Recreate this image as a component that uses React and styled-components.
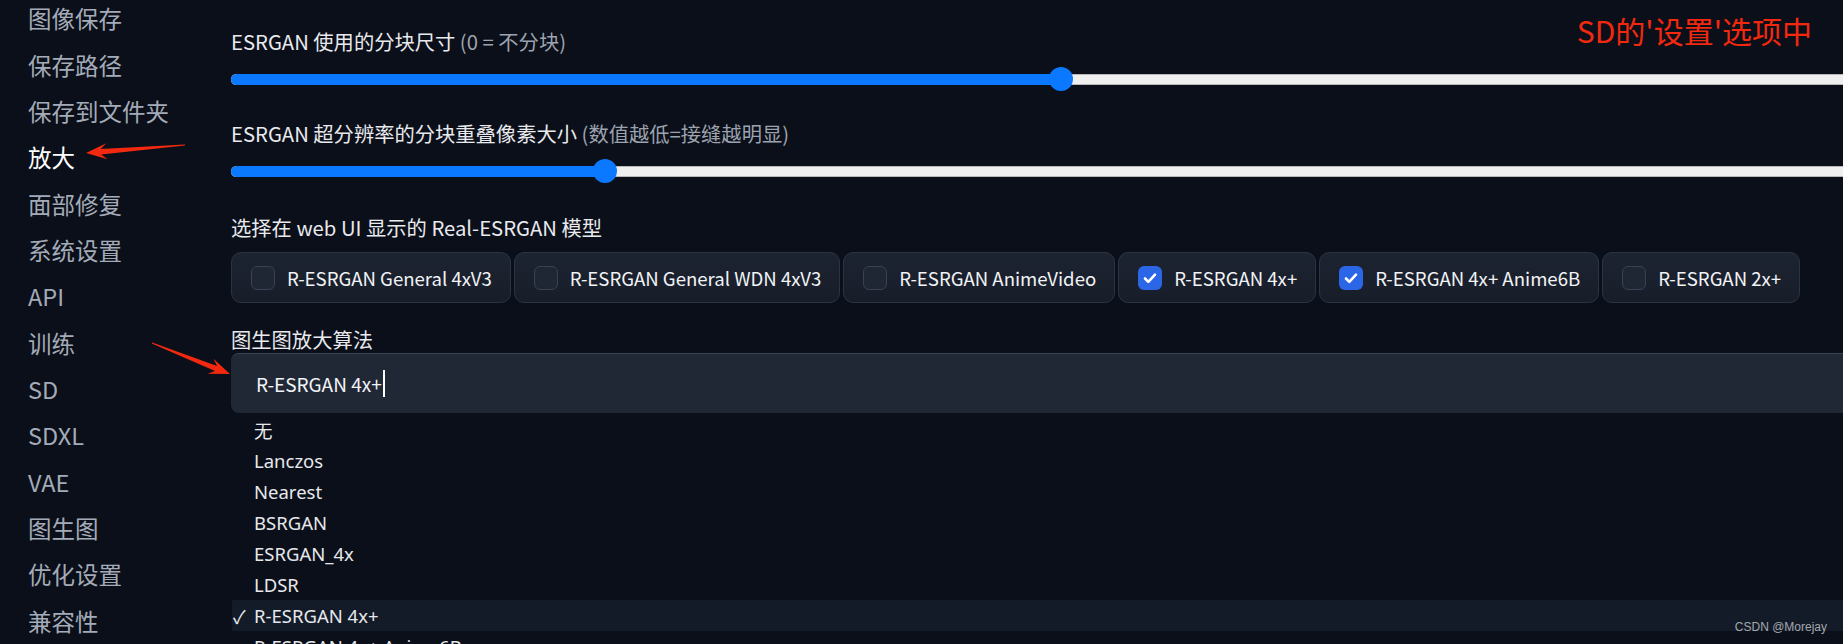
import React from "react";
import styled, { createGlobalStyle } from "styled-components";

const GlobalStyle = createGlobalStyle`
  html, body {
    margin: 0;
    padding: 0;
    background: #0b0f19;
  }
  body {
    font-family: "Noto Sans CJK SC", "Noto Sans", sans-serif;
    overflow: hidden;
  }
`;

const navItems = [
  "图像保存",
  "保存路径",
  "保存到文件夹",
  "放大",
  "面部修复",
  "系统设置",
  "API",
  "训练",
  "SD",
  "SDXL",
  "VAE",
  "图生图",
  "优化设置",
  "兼容性",
];

const models = [
  { name: "R-ESRGAN General 4xV3", checked: false },
  { name: "R-ESRGAN General WDN 4xV3", checked: false },
  { name: "R-ESRGAN AnimeVideo", checked: false },
  { name: "R-ESRGAN 4x+", checked: true },
  { name: "R-ESRGAN 4x+ Anime6B", checked: true },
  { name: "R-ESRGAN 2x+", checked: false },
];

const upscalers = [
  "无",
  "Lanczos",
  "Nearest",
  "BSRGAN",
  "ESRGAN_4x",
  "LDSR",
  "R-ESRGAN 4x+",
  "R-ESRGAN 4x+ Anime6B",
  "ScuNET",
];

// tapered annotation arrow, like the ones screenshot tools draw
const arrowPoints = (x1, y1, x2, y2) => {
  const len = Math.hypot(x2 - x1, y2 - y1);
  const ux = (x2 - x1) / len;
  const uy = (y2 - y1) / len;
  const nx = -uy;
  const ny = ux;
  const at = (along, side) => [x2 - ux * along + nx * side, y2 - uy * along + ny * side];
  const pts = [
    [x1 + nx * 0.6, y1 + ny * 0.6],
    at(15, 2.8),
    at(21, 8),
    [x2, y2],
    at(21, -8),
    at(15, -2.8),
    [x1 - nx * 0.6, y1 - ny * 0.6],
  ];
  return pts.map((p) => p.map((v) => v.toFixed(1)).join(",")).join(" ");
};

const Slider = ({ value }) => (
  <SliderRow>
    <Track>
      <Fill style={{ width: `${value}%` }} />
      <Thumb style={{ left: `${value}%` }} />
    </Track>
  </SliderRow>
);

const CheckIcon = () => (
  <svg width="24" height="24" viewBox="0 0 24 24">
    <path
      d="M7 12.5l3.3 3.4L17 8.6"
      fill="none"
      stroke="#fff"
      strokeWidth="2.6"
      strokeLinecap="round"
      strokeLinejoin="round"
    />
  </svg>
);

const App = () => {
  return (
    <Page>
      <GlobalStyle />
      <Sidebar>
        {navItems.map((item) => (
          <NavItem key={item} $active={item === "放大"}>
            {item}
          </NavItem>
        ))}
      </Sidebar>

      <Main>
        <Field $gap={12}>
          <Label>
            ESRGAN 使用的分块尺寸 <Info>(0 = 不分块)</Info>
          </Label>
          <Slider value={48.8} />
        </Field>

        <Field $gap={12} $space={28}>
          <Label>
            ESRGAN 超分辨率的分块重叠像素大小 <Info>(数值越低=接缝越明显)</Info>
          </Label>
          <Slider value={22} />
        </Field>

        <Field $gap={11} $space={30}>
          <Label>选择在 web UI 显示的 Real-ESRGAN 模型</Label>
          <CardRow>
            {models.map((m) => (
              <Card key={m.name}>
                <Box $checked={m.checked}>{m.checked && <CheckIcon />}</Box>
                {m.name}
              </Card>
            ))}
          </CardRow>
        </Field>

        <Field $gap={0} $space={22}>
          <Label>图生图放大算法</Label>
          <Dropdown>
            <Input>
              R-ESRGAN 4x+
              <Caret />
            </Input>
            <Options>
              {upscalers.map((u) => (
                <Option key={u} $selected={u === "R-ESRGAN 4x+"}>
                  <Tick>{u === "R-ESRGAN 4x+" ? "✓" : ""}</Tick>
                  {u}
                </Option>
              ))}
            </Options>
          </Dropdown>
        </Field>
      </Main>

      <Arrows width="1843" height="644" viewBox="0 0 1843 644">
        <polygon points={arrowPoints(185, 145, 86, 153)} fill="#f2290f" />
        <polygon points={arrowPoints(152, 343, 230, 374)} fill="#f2290f" />
      </Arrows>
      <Note>SD的'设置'选项中</Note>
      <Watermark>CSDN @Morejay</Watermark>
    </Page>
  );
};

const Page = styled.div`
  position: relative;
  display: flex;
  width: 100vw;
  height: 644px;
  overflow: hidden;
  background: #0b0f19;
`;

const Sidebar = styled.nav`
  flex: 0 0 231px;
  box-sizing: border-box;
  padding-left: 28px;
  margin-top: -5px;
  display: flex;
  flex-direction: column;
`;

const NavItem = styled.div`
  height: 46.5px;
  display: flex;
  align-items: center;
  font-size: 23.5px;
  white-space: nowrap;
  color: ${(p) => (p.$active ? "#ffffff" : "#a3abb8")};
`;

const Main = styled.main`
  flex: 0 0 1700px;
  display: flex;
  flex-direction: column;
  padding-top: 27px;
`;

const Field = styled.section`
  display: flex;
  flex-direction: column;
  gap: ${(p) => p.$gap}px;
  margin-top: ${(p) => p.$space || 0}px;
`;

const Label = styled.div`
  font-size: 20.3px;
  line-height: 28px;
  color: #e8eaee;
  white-space: nowrap;
`;

const Info = styled.span`
  color: #9ca3af;
`;

const SliderRow = styled.div`
  height: 24px;
  display: flex;
  align-items: center;
`;

const Track = styled.div`
  position: relative;
  width: 100%;
  height: 11px;
  border-radius: 6px;
  background: #efefef;
  box-shadow: inset 0 0 0 1px #b9b9b9;
`;

const Fill = styled.div`
  height: 100%;
  border-radius: 6px 0 0 6px;
  background: #0a78ff;
`;

const Thumb = styled.div`
  position: absolute;
  top: 50%;
  width: 24px;
  height: 24px;
  border-radius: 50%;
  background: #0a78ff;
  transform: translate(-50%, -50%);
`;

const CardRow = styled.div`
  display: flex;
  gap: 3px;
`;

const Card = styled.label`
  flex: none;
  display: flex;
  align-items: center;
  gap: 12px;
  height: 51px;
  box-sizing: border-box;
  padding: 0 18px 0 19px;
  border: 1px solid #2c3444;
  border-radius: 10px;
  background: linear-gradient(#1d2431, #171d29);
  font-size: 18.6px;
  color: #f1f3f6;
  white-space: nowrap;
`;

const Box = styled.span`
  flex: none;
  width: 24px;
  height: 24px;
  box-sizing: border-box;
  border-radius: 6px;
  display: flex;
  align-items: center;
  justify-content: center;
  background: ${(p) => (p.$checked ? "#2b66e6" : "#1f2735")};
  border: ${(p) => (p.$checked ? "none" : "1px solid #394253")};
`;

const Dropdown = styled.div`
  position: relative;
`;

const Input = styled.div`
  height: 60px;
  box-sizing: border-box;
  display: flex;
  align-items: center;
  padding-left: 25px;
  background: #202836;
  border-top: 1px solid #3a4352;
  border-radius: 8px 0 0 8px;
  font-size: 19px;
  color: #f1f3f6;
`;

const Caret = styled.span`
  width: 2px;
  height: 27px;
  margin-left: 1px;
  background: #ffffff;
`;

const Options = styled.ul`
  position: absolute;
  top: 61px;
  left: 1px;
  right: 0;
  margin: 0;
  padding: 0;
  list-style: none;
  background: #0b0f19;
`;

const Option = styled.li`
  height: 31px;
  display: flex;
  align-items: center;
  font-family: "Noto Sans", "Noto Sans CJK SC", sans-serif;
  font-size: 18.5px;
  color: #e6e8ec;
  background: ${(p) => (p.$selected ? "#131a28" : "transparent")};
`;

const Tick = styled.span`
  flex: none;
  width: 22px;
  padding-left: 1px;
  box-sizing: border-box;
`;

const Arrows = styled.svg`
  position: absolute;
  left: 0;
  top: 0;
  pointer-events: none;
`;

const Note = styled.div`
  position: absolute;
  top: 11px;
  right: 31px;
  font-size: 30px;
  line-height: 38px;
  color: #f2290f;
  white-space: nowrap;
`;

const Watermark = styled.div`
  position: absolute;
  right: 16px;
  bottom: 9px;
  font-family: "Liberation Sans", sans-serif;
  font-size: 12px;
  line-height: 16px;
  color: #a3a7ad;
`;

export default App;
